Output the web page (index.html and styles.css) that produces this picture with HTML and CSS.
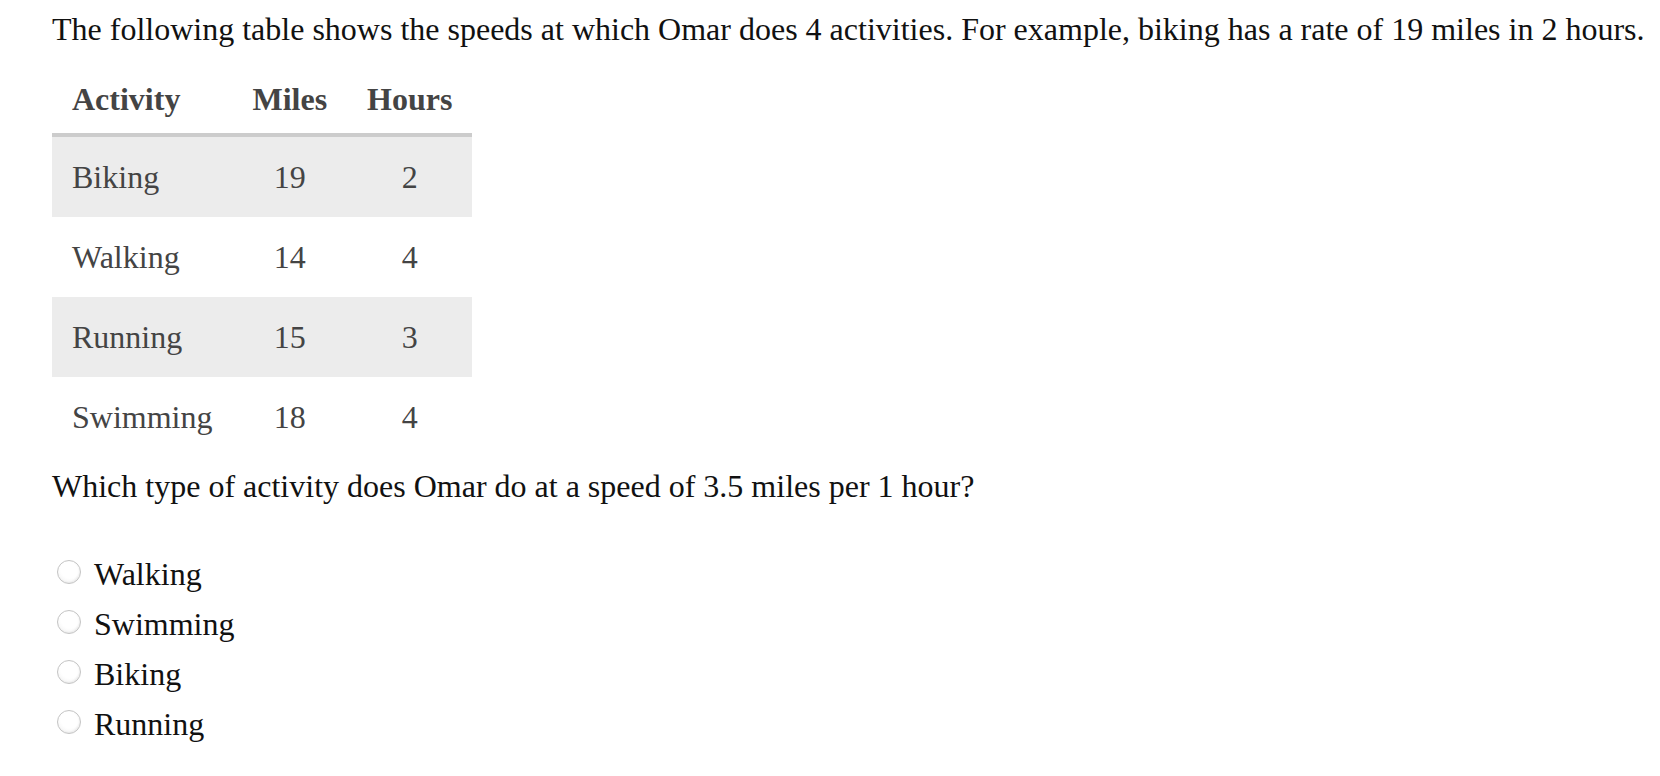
FILE: index.html
```html
<!DOCTYPE html>
<html lang="en">
<head>
<meta charset="utf-8">
<title>Activity speeds</title>
<link rel="stylesheet" href="styles.css">
</head>
<body>
<div class="page">
  <p class="intro">The following table shows the speeds at which Omar does 4 activities. For example, biking has a rate of 19 miles in 2 hours.</p>
  <table class="rates">
    <thead>
      <tr><th class="col-name">Activity</th><th>Miles</th><th>Hours</th></tr>
    </thead>
    <tbody>
      <tr class="shaded"><td class="col-name">Biking</td><td>19</td><td>2</td></tr>
      <tr><td class="col-name">Walking</td><td>14</td><td>4</td></tr>
      <tr class="shaded"><td class="col-name">Running</td><td>15</td><td>3</td></tr>
      <tr><td class="col-name">Swimming</td><td>18</td><td>4</td></tr>
    </tbody>
  </table>
  <p class="question">Which type of activity does Omar do at a speed of 3.5 miles per 1 hour?</p>
  <div class="options">
    <label class="option"><input type="radio" name="act" class="radio"><span>Walking</span></label>
    <label class="option"><input type="radio" name="act" class="radio"><span>Swimming</span></label>
    <label class="option"><input type="radio" name="act" class="radio"><span>Biking</span></label>
    <label class="option"><input type="radio" name="act" class="radio"><span>Running</span></label>
  </div>
</div>
</body>
</html>
```
FILE: styles.css
```css
html, body {
  margin: 0;
  padding: 0;
  background: #ffffff;
}

.page {
  padding: 9px 0 0 52px;
  font-family: "Liberation Serif", "Times New Roman", serif;
  font-size: 32px;
  color: #111111;
}

.intro {
  margin: 0;
  line-height: 40px;
  white-space: nowrap;
}

.rates {
  border-collapse: collapse;
  border-spacing: 0;
  color: #444444;
  font-size: 32px;
}

.rates th {
  font-weight: bold;
  line-height: 40px;
  padding: 30px 20px 14px;
  text-align: center;
  border-bottom: 4px solid #cccccc;
}

.rates td {
  line-height: 40px;
  padding: 20px 20px;
  text-align: center;
}

.rates .col-name {
  text-align: left;
}

.rates .shaded {
  background: #ececec;
}

.question {
  margin: 9px 0 0;
  line-height: 40px;
}

.options {
  margin-top: 43px;
  display: flex;
  flex-direction: column;
}

.option {
  display: flex;
  align-items: flex-start;
  line-height: 50px;
  height: 50px;
}

.radio {
  appearance: none;
  -webkit-appearance: none;
  width: 24px;
  height: 24px;
  margin: 11px 13px 0 5px;
  border: 1px solid #c4c4c4;
  border-radius: 50%;
  background: radial-gradient(circle at 55% 35%, #ffffff 50%, #eeeeee 100%);
  box-shadow: inset -1px -1px 2px rgba(0, 0, 0, 0.06);
  box-sizing: border-box;
  flex: none;
}
```
